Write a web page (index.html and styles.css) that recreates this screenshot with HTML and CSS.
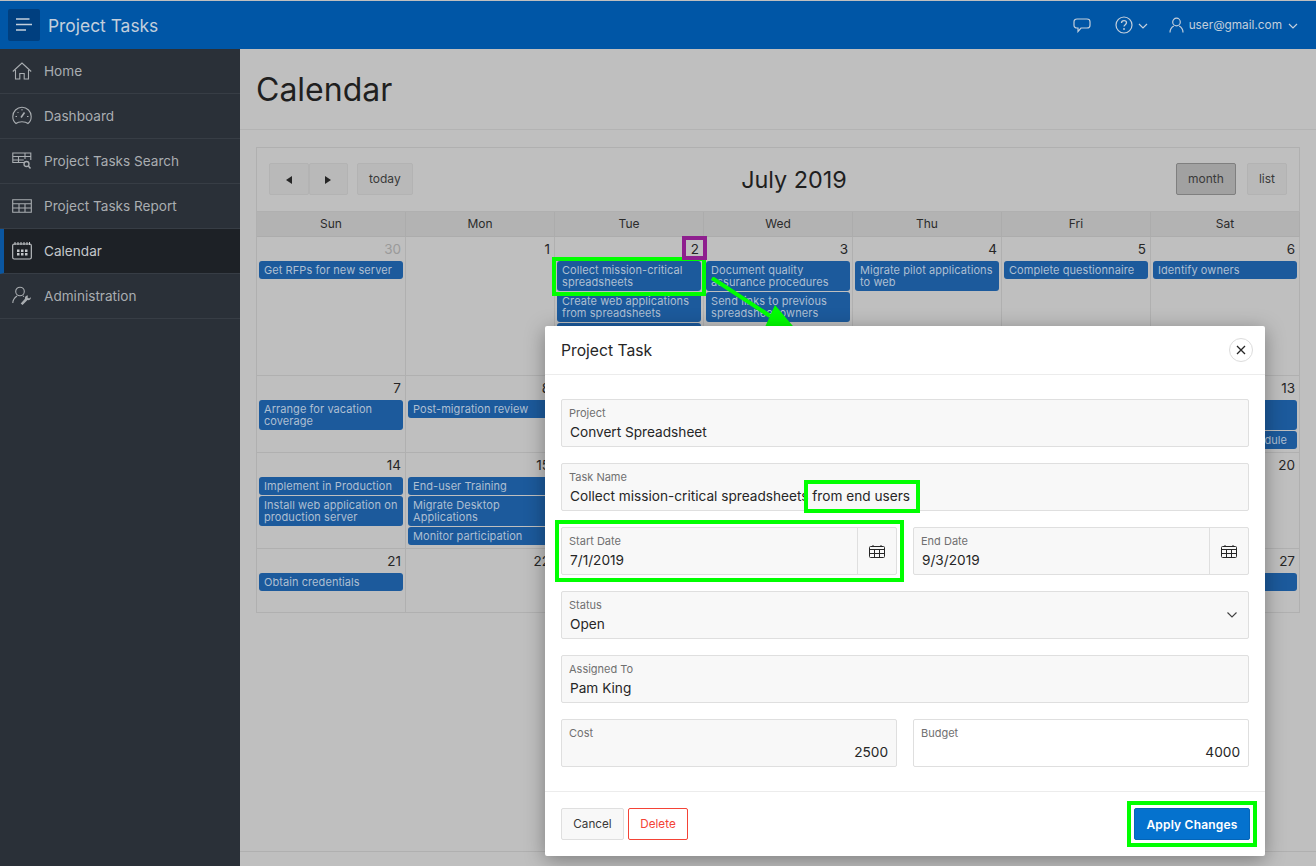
FILE: index.html
```html
<!DOCTYPE html>
<html lang="en">
<head>
    <meta charset="UTF-8">
    <title>Project Tasks</title>
    <link rel="stylesheet" href="styles.css">
</head>
<body>
    <header class="topbar">
        <div class="toggle">
            <svg width="16" height="14" viewBox="0 0 16 14"><path d="M0 1h13.500M0 6.500h16M0 12h10" stroke="#c3cfdc" stroke-width="1.600" fill="none"/></svg>
        </div>
        <div class="app-name">Project Tasks</div>
        <div class="top-actions">
            <svg class="chat-icon" width="18" height="15" viewBox="0 0 18 15"><path d="M4 1h10c1.800 0 3 1.200 3 2.800v3.400C17 9 15.800 10 14 10H8l-3 3.500V10H4C2.200 10 1 9 1 7.200V3.800C1 2.200 2.200 1 4 1z" stroke="#c3cfdc" stroke-width="1.200" fill="none"/></svg>
            <svg class="help-icon" width="18" height="18" viewBox="0 0 18 18"><circle cx="9" cy="9" r="8" stroke="#c3cfdc" stroke-width="1.200" fill="none"/><path d="M6.500 7c0-1.500 1.100-2.300 2.500-2.300s2.500.9 2.500 2.100c0 1.800-2.500 1.900-2.500 3.700" stroke="#c3cfdc" stroke-width="1.300" fill="none"/><circle cx="9" cy="13" r=".9" fill="#c3cfdc"/></svg>
            <svg class="chev" width="10" height="6" viewBox="0 0 10 6"><path d="M1 1l4 4 4-4" stroke="#c3cfdc" stroke-width="1.200" fill="none"/></svg>
            <svg class="user-icon" width="15" height="16" viewBox="0 0 15 16"><circle cx="7.500" cy="5" r="3.800" stroke="#c3cfdc" stroke-width="1.200" fill="none"/><path d="M1 15.500c0-3.500 2-5.500 3.800-6.500M14 15.500c0-3.500-2-5.500-3.800-6.500" stroke="#c3cfdc" stroke-width="1.200" fill="none"/></svg>
            <span class="user-name">user@gmail.com</span>
            <svg class="chev" width="10" height="6" viewBox="0 0 10 6"><path d="M1 1l4 4 4-4" stroke="#c3cfdc" stroke-width="1.200" fill="none"/></svg>
        </div>
    </header>

    <div class="layout">
        <nav class="sidebar">
            <div class="nav-item">
                <svg width="20" height="18" viewBox="0 0 20 18"><path d="M.8 9.500L10 1l9.200 8.500M3.500 8v9h4.300v-5.500h4.400V17h4.300V8" stroke="#a9adb1" stroke-width="1.100" fill="none"/></svg>
                Home
            </div>
            <div class="nav-item">
                <svg width="20" height="20" viewBox="0 0 20 20"><path d="M4 17.500C2 16 .8 13.500.8 10.500a9.200 9.200 0 0 1 18.400 0c0 3-1.200 5.500-3.200 7-1.500-1.300-3.500-1.700-6-1.700s-4.500.4-6 1.700z" stroke="#a9adb1" stroke-width="1.100" fill="none"/><path d="M9 11.500l3.500-5" stroke="#a9adb1" stroke-width="1.600"/><path d="M10 3v1.500M3.500 10.500H5M15 10.500h1.500M5.500 6l1 1" stroke="#a9adb1"/></svg>
                Dashboard
            </div>
            <div class="nav-item">
                <svg width="20" height="18" viewBox="0 0 20 18"><path d="M12 10.500H.8V1h18v7M.8 4.500h18M.8 8h11M6.500 4.500v6M13 1v6" stroke="#a9adb1" stroke-width="1.100" fill="none"/><circle cx="14.500" cy="12" r="2.500" stroke="#a9adb1" stroke-width="1.300" fill="none"/><path d="M16.300 14l2.200 2.500" stroke="#a9adb1" stroke-width="1.500"/></svg>
                Project Tasks Search
            </div>
            <div class="nav-item">
                <svg width="20" height="14" viewBox="0 0 20 14"><path d="M.7.700h18.600v12.600H.7zM.7 4.700h18.600M.7 9h18.600M7 4.700v8.600M13 4.700v8.600" stroke="#a9adb1" stroke-width="1.100" fill="none"/></svg>
                Project Tasks Report
            </div>
            <div class="nav-item active">
                <svg width="20" height="18" viewBox="0 0 20 18"><rect x=".7" y="2" width="18.600" height="15" rx="1.500" stroke="#c4c7ca" stroke-width="1.100" fill="none"/><path d="M3 0v3M6 0v3M9 0v3M12 0v3M15 0v3M17.500 0v3" stroke="#c4c7ca"/><path d="M5 7.500h2.500V10H5zM9 7.500h2.500V10H9zM13 7.500h2.500V10H13zM5 11h2.500v2.500H5zM9 11h2.500v2.500H9zM13 11h2.500v2.500H13z" fill="#c4c7ca"/></svg>
                Calendar
            </div>
            <div class="nav-item">
                <svg width="20" height="20" viewBox="0 0 20 20"><circle cx="8" cy="5.500" r="4.300" stroke="#a9adb1" stroke-width="1.100" fill="none"/><path d="M.8 17c0-3.500 2-5.500 4.200-7M11 10l1 .6" stroke="#a9adb1" stroke-width="1.100" fill="none"/><path d="M10.500 19l5-5c1.500.5 3.500-.5 3.500-2.800l-2 1.300-1.500-1 .5-2c-2-.3-3.500 1.500-3 3.300l-4.300 4.800z" fill="#a9adb1"/></svg>
                Administration
            </div>
        </nav>

        <main class="content">
            <div class="page-head"><h1>Calendar</h1></div>

            <section class="calendar">
                <div class="cal-toolbar">
                    <div class="cal-left">
                        <div class="btn-group">
                            <button class="cal-btn arrow"><span class="tri-left"></span></button>
                            <button class="cal-btn arrow"><span class="tri-right"></span></button>
                        </div>
                        <button class="cal-btn">today</button>
                    </div>
                    <div class="cal-title">July 2019</div>
                    <div class="cal-right">
                        <button class="cal-btn pressed">month</button>
                        <button class="cal-btn">list</button>
                    </div>
                </div>

                <div class="cal-grid">
                    <div class="dow">Sun</div><div class="dow">Mon</div><div class="dow">Tue</div><div class="dow">Wed</div><div class="dow">Thu</div><div class="dow">Fri</div><div class="dow">Sat</div>

                    <div class="day"><div class="num other">30</div><div class="ev">Get RFPs for new server</div></div>
                    <div class="day"><div class="num">1</div></div>
                    <div class="day"><div class="num">2</div><div class="ev">Collect mission-critical spreadsheets</div><div class="ev">Create web applications from spreadsheets</div><div class="ev">Define project scope</div></div>
                    <div class="day"><div class="num">3</div><div class="ev">Document quality assurance procedures</div><div class="ev">Send links to previous spreadsheet owners</div></div>
                    <div class="day"><div class="num">4</div><div class="ev">Migrate pilot applications to web</div></div>
                    <div class="day"><div class="num">5</div><div class="ev">Complete questionnaire</div></div>
                    <div class="day"><div class="num">6</div><div class="ev">Identify owners</div></div>

                    <div class="day"><div class="num">7</div><div class="ev">Arrange for vacation coverage</div></div>
                    <div class="day"><div class="num">8</div><div class="ev">Post-migration review</div></div>
                    <div class="day"></div>
                    <div class="day"></div>
                    <div class="day"></div>
                    <div class="day"></div>
                    <div class="day"><div class="num">13</div><div class="ev tall"></div><div class="ev right-text">dule</div></div>

                    <div class="day"><div class="num">14</div><div class="ev">Implement in Production</div><div class="ev">Install web application on production server</div></div>
                    <div class="day"><div class="num">15</div><div class="ev">End-user Training</div><div class="ev">Migrate Desktop Applications</div><div class="ev">Monitor participation</div></div>
                    <div class="day"></div>
                    <div class="day"></div>
                    <div class="day"></div>
                    <div class="day"></div>
                    <div class="day"><div class="num">20</div></div>

                    <div class="day"><div class="num">21</div><div class="ev">Obtain credentials</div></div>
                    <div class="day"><div class="num">22</div></div>
                    <div class="day"></div>
                    <div class="day"></div>
                    <div class="day"></div>
                    <div class="day"></div>
                    <div class="day"><div class="num">27</div><div class="ev">&nbsp;</div></div>
                </div>
            </section>

            <div class="page-foot"></div>
        </main>
    </div>

    <!-- arrow from the event to the dialog -->
    <svg class="arrow-mark" width="90" height="60" viewBox="0 0 90 60"><path d="M2 1l58 38" stroke="#00ff00" stroke-width="4"/><path d="M65 28L55 50l33 5z" fill="#00ff00"/></svg>

    <div class="dialog">
        <div class="dialog-head">
            <div class="dialog-title">Project Task</div>
            <div class="close">
                <svg width="10" height="10" viewBox="0 0 10 10"><path d="M1 1l8 8M9 1l-8 8" stroke="#262626" stroke-width="1.300"/></svg>
            </div>
        </div>
        <div class="dialog-body">
            <div class="field"><label>Project</label><div class="val">Convert Spreadsheet</div></div>
            <div class="field"><label>Task Name</label><div class="val">Collect mission-critical spreadsheets from end users</div></div>
            <div class="field-row">
                <div class="field date">
                    <div class="date-main"><label>Start Date</label><div class="val">7/1/2019</div></div>
                    <div class="date-btn"><svg width="16" height="13" viewBox="0 0 16 13"><path d="M1.500 1.500h13a1 1 0 0 1 1 1v9a1 1 0 0 1-1 1h-13a1 1 0 0 1-1-1v-9a1 1 0 0 1 1-1zM.5 4.500h15M.5 8.500h15M5.500 4.500v8M10.500 4.500v8M4 0v2M12 0v2" stroke="#262626" fill="none"/></svg></div>
                </div>
                <div class="field date">
                    <div class="date-main"><label>End Date</label><div class="val">9/3/2019</div></div>
                    <div class="date-btn"><svg width="16" height="13" viewBox="0 0 16 13"><path d="M1.500 1.500h13a1 1 0 0 1 1 1v9a1 1 0 0 1-1 1h-13a1 1 0 0 1-1-1v-9a1 1 0 0 1 1-1zM.5 4.500h15M.5 8.500h15M5.500 4.500v8M10.500 4.500v8M4 0v2M12 0v2" stroke="#262626" fill="none"/></svg></div>
                </div>
            </div>
            <div class="field select">
                <label>Status</label><div class="val">Open</div>
                <svg class="select-chev" width="10" height="6" viewBox="0 0 10 6"><path d="M.5.500L5 5 9.500.500" stroke="#404040" stroke-width="1.100" fill="none"/></svg>
            </div>
            <div class="field"><label>Assigned To</label><div class="val">Pam King</div></div>
            <div class="field-row">
                <div class="field"><label>Cost</label><div class="val num-val">2500</div></div>
                <div class="field plain"><label>Budget</label><div class="val num-val">4000</div></div>
            </div>
        </div>
        <div class="dialog-foot">
            <button class="btn">Cancel</button>
            <button class="btn danger">Delete</button>
            <button class="btn primary">Apply Changes</button>
        </div>
    </div>

    <!-- annotations drawn on the screenshot -->
    <div class="mark green" style="left:552px;top:257px;width:154px;height:39px"></div>
    <div class="mark purple" style="left:682px;top:236px;width:25px;height:24px"></div>
    <div class="mark green" style="left:804px;top:480px;width:116px;height:33px"></div>
    <div class="mark green" style="left:555px;top:520px;width:349px;height:62px"></div>
    <div class="mark green" style="left:1127px;top:801px;width:130px;height:46px"></div>
</body>
</html>
```

FILE: styles.css
```css
* {
    box-sizing: border-box;
}

body {
    margin: 0;
    height: 866px;
    overflow: hidden;
    position: relative;
    background: #bfbfbf;
    font-family: Inter, "Liberation Sans", sans-serif;
    color: #262626;
}

.topbar {
    height: 48px;
    margin-top: 1px;
    background: #0056a6;
    display: flex;
    align-items: center;
    padding-left: 8px;
    padding-right: 18px;
    color: #c3cfdc;
}

.toggle {
    width: 32px;
    height: 32px;
    background: #003f7f;
    border-radius: 2px;
    display: flex;
    align-items: center;
    justify-content: center;
}

.app-name {
    margin-left: 8px;
    font-size: 17.4px;
}

.top-actions {
    margin-left: auto;
    display: flex;
    align-items: center;
}

.chat-icon {
    margin-right: 24px;
}

.help-icon {
    margin-right: 5px;
}

.chev {
    margin-top: 1px;
}

.user-icon {
    margin-left: 21px;
    margin-right: 5px;
}

.user-name {
    font-size: 11.8px;
    margin-right: 6px;
}

.layout {
    display: flex;
    height: 817px;
}

.sidebar {
    width: 240px;
    flex: none;
    background: #2a3038;
}

.nav-item {
    height: 45px;
    display: flex;
    align-items: center;
    gap: 12px;
    padding-left: 12px;
    border-bottom: 1px solid #373d45;
    font-size: 13.6px;
    color: #a9adb1;
}

.nav-item.active {
    background: #1d2126;
    border-left: 4px solid #0a56a0;
    padding-left: 8px;
    color: #c4c7ca;
}

.content {
    flex: 1;
    display: flex;
    flex-direction: column;
    min-width: 0;
}

.page-head {
    height: 81px;
    border-bottom: 1px solid #b3b3b3;
    padding: 1px 0 0 16px;
    display: flex;
    align-items: center;
}

h1 {
    margin: 0;
    font-size: 32px;
    font-weight: 400;
    color: #1f1f1f;
}

.calendar {
    margin: 17px 16px 0;
    border-left: 1px solid #b0b0b0;
    border-top: 1px solid #b0b0b0;
}

.cal-toolbar {
    height: 64px;
    padding: 15px 12px 0 12px;
    border-right: 1px solid #b0b0b0;
    border-bottom: 1px solid #b0b0b0;
    position: relative;
    display: flex;
    justify-content: space-between;
}

.cal-left,
.cal-right {
    display: flex;
    gap: 9px;
}

.cal-right {
    gap: 11px;
}

.btn-group {
    display: flex;
}

.cal-btn {
    height: 32px;
    padding: 0 11px 2px;
    background: #b9b9b9;
    border: 1px solid #b3b3b3;
    border-radius: 2px;
    font-family: inherit;
    font-size: 12px;
    color: #3a3a3a;
}

.cal-btn.arrow {
    width: 39.5px;
    padding: 0;
}

.cal-btn.pressed {
    background: #a1a1a1;
    border-color: #7f7f7f;
    width: 60px;
    padding: 0 0 2px;
}

.tri-left,
.tri-right {
    display: inline-block;
    border-top: 4px solid transparent;
    border-bottom: 4px solid transparent;
}

.tri-left {
    border-right: 6px solid #262626;
}

.tri-right {
    border-left: 6px solid #262626;
}

.cal-title {
    position: absolute;
    left: 32px;
    right: 0;
    top: 16px;
    text-align: center;
    font-size: 23.4px;
    line-height: 32px;
    color: #1f1f1f;
    pointer-events: none;
}

.cal-grid {
    display: grid;
    grid-template-columns: repeat(7, 149px);
    grid-template-rows: 25px 139px 77px 96px 64px;
}

.dow {
    background: #b3b3b3;
    border-right: 1px solid #acacac;
    border-bottom: 1px solid #acacac;
    font-size: 12px;
    text-align: center;
    line-height: 24px;
    color: #2b2b2b;
}

.day {
    border-right: 1px solid #b0b0b0;
    border-bottom: 1px solid #b0b0b0;
    padding: 0 2px;
}

.num {
    height: 24px;
    padding: 3px 2px 0 0;
    text-align: right;
    font-size: 13.5px;
    line-height: 18px;
    color: #262626;
}

.num.other {
    color: #9a9a9a;
}

.ev {
    background: #1c5a9c;
    color: #aebfd2;
    font-size: 11px;
    line-height: 12px;
    letter-spacing: .07px;
    padding: 3px 5px;
    border-radius: 3px;
    margin-bottom: 1px;
}

.ev.tall {
    height: 30px;
}

.ev.right-text {
    text-align: right;
    padding-right: 10px;
}

.page-foot {
    margin-top: auto;
    height: 15px;
    border-top: 1px solid #b0b0b0;
}

.arrow-mark {
    position: absolute;
    left: 710px;
    top: 277px;
}

.dialog {
    position: absolute;
    left: 545px;
    top: 326px;
    width: 720px;
    height: 530px;
    background: #fff;
    border-radius: 2px;
    box-shadow: 0 4px 20px rgba(0, 0, 0, .35);
    display: flex;
    flex-direction: column;
}

.dialog-head {
    height: 49px;
    border-bottom: 1px solid #ececec;
    display: flex;
    align-items: center;
    justify-content: space-between;
    padding: 0 12px 0 16px;
    flex: none;
}

.dialog-title {
    font-size: 15.7px;
    color: #262626;
}

.close {
    width: 24px;
    height: 24px;
    border: 1px solid #dcdcdc;
    border-radius: 50%;
    display: flex;
    align-items: center;
    justify-content: center;
}

.dialog-body {
    padding: 24px 16px;
    display: flex;
    flex-direction: column;
    gap: 16px;
    flex: 1;
}

.field-row {
    display: flex;
    gap: 16px;
}

.field-row .field {
    flex: 1;
    min-width: 0;
}

.field {
    height: 48px;
    background: #f8f8f8;
    border: 1px solid #dfdfdf;
    border-radius: 2px;
    padding: 7px 8px 0 7px;
    position: relative;
}

.field.plain {
    background: #fff;
}

.field label {
    display: block;
    font-size: 11px;
    line-height: 13px;
    color: #707070;
}

.val {
    font-size: 13.65px;
    line-height: 18px;
    margin-top: 3px;
    margin-left: 1px;
    color: #262626;
}

.num-val {
    text-align: right;
}

.field.date {
    display: flex;
    padding: 0;
}

.date-main {
    flex: 1;
    padding: 7px 0 0 7px;
}

.date-btn {
    width: 39px;
    border-left: 1px solid #dfdfdf;
    display: flex;
    align-items: center;
    justify-content: center;
}

.select-chev {
    position: absolute;
    right: 11px;
    top: 20px;
}

.dialog-foot {
    height: 65px;
    border-top: 1px solid #ececec;
    display: flex;
    align-items: center;
    padding: 0 15px 0 16px;
    gap: 4px;
    flex: none;
}

.btn {
    height: 32px;
    width: 63px;
    padding: 0;
    font-family: inherit;
    font-size: 11.7px;
    background: #f8f8f8;
    border: 1px solid #dfdfdf;
    border-radius: 2px;
    color: #383838;
}

.btn.danger {
    width: 60px;
    background: #fff;
    border-color: #f44336;
    color: #f44336;
}

.btn.primary {
    margin-left: auto;
    width: 116px;
    background: #0572ce;
    border-color: #0565b8;
    color: #fff;
    font-size: 12px;
    font-weight: 600;
    letter-spacing: .2px;
}

.mark {
    position: absolute;
    border: 4px solid #00ff00;
    pointer-events: none;
}

.mark.purple {
    border-color: #8e1f8e;
}
```
